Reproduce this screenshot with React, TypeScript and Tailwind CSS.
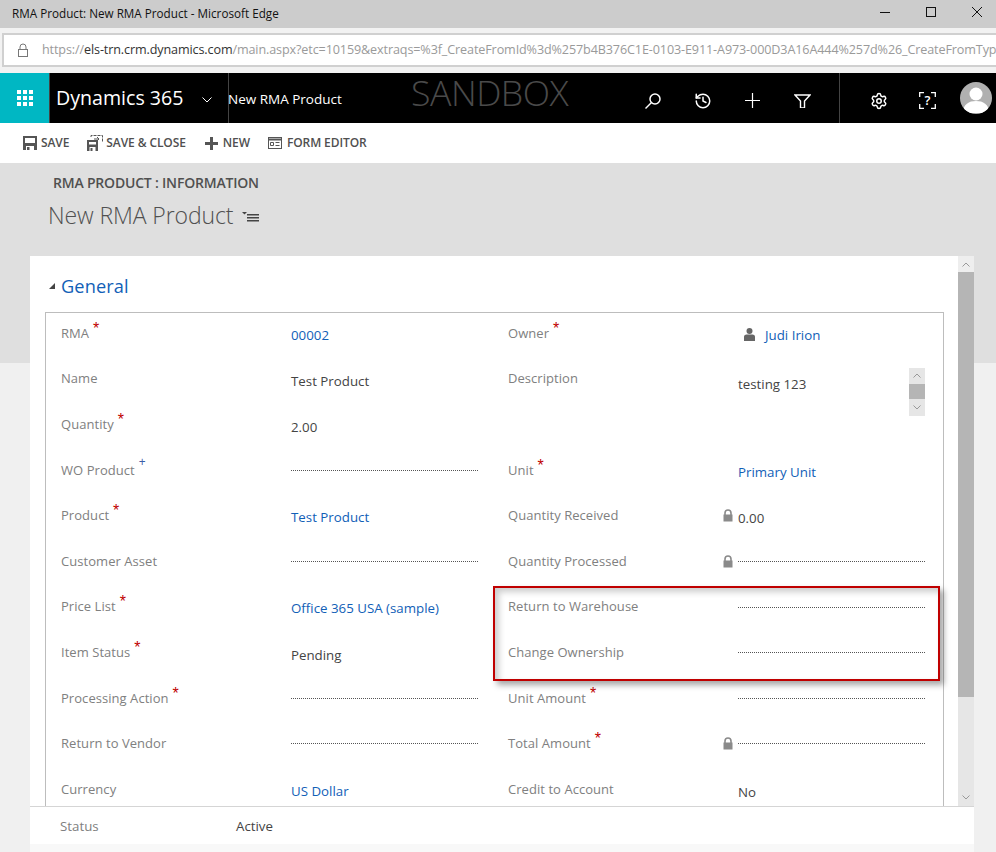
import React from "react";
import { History, Settings } from "lucide-react";

const font = "font-['Open_Sans',_'Noto_Sans',_sans-serif]";

function Star({ blue }: { blue?: boolean }) {
  return blue ? (
    <span className="ml-[4px] mt-[5px] text-[12px] leading-none text-[#3b5ea8] self-start pt-[3px]">+</span>
  ) : (
    <span className="ml-[4px] text-[16px] leading-none text-[#c00000] self-start pt-[10px] font-['Liberation_Sans',_sans-serif]">*</span>
  );
}

function Lock() {
  return (
    <svg width="10" height="13" viewBox="0 0 10 13" className="absolute left-[-15px] top-[16px]">
      <path d="M2 6V4a3 3 0 0 1 6 0v2" fill="none" stroke="#8a8a8a" strokeWidth="1.6" />
      <rect x="0.5" y="5.500" width="9" height="7" fill="#8a8a8a" />
    </svg>
  );
}

function Dash() {
  return <div className="w-full border-t border-dotted border-[#555555]" />;
}

type RowP = {
  label: string;
  req?: boolean;
  rec?: boolean;
  children?: React.ReactNode;
  off?: string;
  h?: string;
};

function Row({ label, req, rec, children, off, h }: RowP) {
  return (
    <div className={`flex ${h ?? "h-[45.6px]"}`}>
      <div className="w-[245px] pl-[15px] h-[45.6px] flex items-center text-[13px] text-[#808080] tracking-[0.05px]">
        <span>{label}</span>
        {req && <Star />}
        {rec && <Star blue />}
      </div>
      <div className={`w-[187px] relative ${off ?? "h-[45.6px] flex items-center"}`}>{children}</div>
    </div>
  );
}

const link = "text-[13.3px] text-[#1160b7]";
const val = "text-[13.3px] text-[#444444]";

function NavIcon({ children, className }: { children: React.ReactNode; className: string }) {
  return <div className={className}>{children}</div>;
}

export default function App() {
  return (
    <div className={`w-[996px] h-[852px] overflow-hidden bg-[#f0f0f0] relative ${font}`}>
      {/* Title bar */}
      <div className="h-[28px] bg-[#cccccc] flex items-center pl-[12px] text-[11.7px] text-[#111111]">
        <span className="flex-1">RMA Product: New RMA Product - Microsoft Edge</span>
        <svg width="12" height="12" viewBox="0 0 12 12" className="mr-[34px] -mt-[4px]"><path d="M1 6.500h10" stroke="#111" /></svg>
        <svg width="12" height="12" viewBox="0 0 12 12" className="mr-[34px] -mt-[4px]"><rect x="1.500" y="1.500" width="9" height="9" fill="none" stroke="#111" /></svg>
        <svg width="12" height="12" viewBox="0 0 12 12" className="mr-[13px] -mt-[4px]"><path d="M1 1l10 10M11 1L1 11" stroke="#111" /></svg>
      </div>
      {/* Address bar */}
      <div className="h-[45px] bg-[#f2f2f2] pt-[5px] pl-[2px]">
        <div className="h-[34px] bg-white border-y-2 border-l-2 border-[#d0d0d0] flex items-center pl-[13px] overflow-hidden whitespace-nowrap text-[12.6px] tracking-[-0.12px] text-[#9a9a9a]">
          <svg width="12" height="14" viewBox="0 0 12 14" className="mr-[13px] shrink-0">
            <path d="M3 6V4a3 3 0 0 1 6 0v2" fill="none" stroke="#777" />
            <rect x="1.500" y="6.500" width="9" height="7" fill="none" stroke="#777" />
          </svg>
          <span>https://</span>
          <span className="text-[#333333]">els-trn.crm.dynamics.com</span>
          <span>/main.aspx?etc=10159&amp;extraqs=%3f_CreateFromId%3d%257b4B376C1E-0103-E911-A973-000D3A16A444%257d%26_CreateFromTyp</span>
        </div>
      </div>
      {/* Nav */}
      <div className="h-[50px] bg-black flex items-center text-white relative">
        <div className="w-[50px] h-full bg-[#00b7c3] border-r border-[#444] flex items-center justify-center">
          <svg width="16" height="16" viewBox="0 0 16 16" fill="#fff">
            {[0, 6, 12].map((y) => [0, 6, 12].map((x) => <rect key={`${x}-${y}`} x={x} y={y} width="4" height="4" />))}
          </svg>
        </div>
        <span className="ml-[6px] w-[135px] text-[19.6px] leading-none font-normal whitespace-nowrap">Dynamics 365</span>
        <svg width="10" height="6" viewBox="0 0 10 6" className="ml-[11px] mt-[4px]"><path d="M.5.500L5 5 9.500.5" fill="none" stroke="#fff" /></svg>
        <div className="ml-[16px] h-full w-px bg-[#444]" />
        <span className="-ml-px mt-[2px] w-[183px] text-[13.5px] whitespace-nowrap">New RMA Product</span>
        <span className="text-[35.7px] leading-none font-light text-[#4a4a4a] -mt-[10px] w-[217px] whitespace-nowrap tracking-[-0.5px]">SANDBOX</span>
        <NavIcon className="w-[50px] flex justify-center mt-[5px]">
          <svg width="18" height="18" viewBox="0 0 18 18" fill="none" stroke="#fff" strokeWidth="1.500"><circle cx="11" cy="7" r="5" /><path d="M7.500 10.500L1.500 16.500" /></svg>
        </NavIcon>
        <NavIcon className="w-[50px] flex justify-center mt-[5px]">
          <History size={18} strokeWidth={2} color="#fff" />
        </NavIcon>
        <NavIcon className="w-[48px] flex justify-center mt-[5px]">
          <svg width="15" height="15" viewBox="0 0 15 15" fill="none" stroke="#fff" strokeWidth="1.200"><path d="M0 7.500h15M7.500 0v15" /></svg>
        </NavIcon>
        <NavIcon className="w-[52px] flex justify-center mt-[5px]">
          <svg width="17" height="14" viewBox="0 0 17 14" fill="none" stroke="#fff" strokeWidth="1.400"><path d="M1 1h15l-5.500 6v7h-4V7z" /></svg>
        </NavIcon>
        <div className="ml-[11px] h-full w-px bg-[#444]" />
        <NavIcon className="ml-[14px] w-[49px] flex justify-center mt-[5px]">
          <Settings size={18} strokeWidth={2} color="#fff" />
        </NavIcon>
        <NavIcon className="w-[49px] flex justify-center mt-[5px]">
          <div className="w-[17px] h-[17px] relative flex items-center justify-center text-[13px] font-semibold leading-none">
            <svg width="17" height="17" viewBox="0 0 17 17" className="absolute inset-0" fill="none" stroke="#fff" strokeWidth="1.300"><path d="M5 .7H.7V5M12 .7h4.300V5M5 16.300H.7V12M12 16.300h4.300V12" /></svg>
            ?
          </div>
        </NavIcon>
        <div className="ml-[8px] w-[32px] h-[32px] rounded-full overflow-hidden bg-[#b0b0b0]">
          <svg width="32" height="32" viewBox="0 0 32 32" fill="#fff"><circle cx="16" cy="12" r="6.500" /><path d="M3 31c0-9 6-12 13-12s13 3 13 12z" /></svg>
        </div>
      </div>
      {/* Toolbar */}
      <div className="h-[40px] bg-white flex items-center pl-[23px] text-[12px] font-semibold text-[#505050] tracking-[-0.1px]">
        <svg width="14" height="14" viewBox="0 0 14 14" className="mr-[4px]"><path d="M0 0h14v14H0z" fill="#555" /><rect x="2" y="2" width="10" height="5" fill="#fff" /><rect x="3" y="10" width="8" height="4" fill="#fff" /><rect x="4" y="11" width="2.500" height="3" fill="#555" /></svg>
        <span className="mr-[18px]">SAVE</span>
        <svg width="16" height="16" viewBox="0 0 16 16" className="mr-[3px]"><path d="M0 5h11v11H0z" fill="#555" /><rect x="2" y="7" width="7" height="2.500" fill="#fff" /><rect x="2.500" y="12" width="6" height="4" fill="#fff" /><rect x="3.500" y="13" width="2" height="3" fill="#555" /><path d="M4 2V.5h11.500V7" fill="none" stroke="#555" strokeDasharray="3 1" /><path d="M7 4h5M10 2l2 2-2 2" fill="none" stroke="#555" /></svg>
        <span className="mr-[19px]">SAVE &amp; CLOSE</span>
        <svg width="13" height="13" viewBox="0 0 13 13" className="mr-[5px]"><path d="M5 0h3v5h5v3H8v5H5V8H0V5h5z" fill="#555" /></svg>
        <span className="mr-[18px]">NEW</span>
        <svg width="14" height="12" viewBox="0 0 14 12" className="mr-[5px]" fill="none" stroke="#555"><rect x=".5" y=".5" width="13" height="11" /><path d="M.5 2.500h13" strokeWidth="2" /><path d="M2.500 5.500h3v3h-3zM7.500 5.500h4M7.500 8.500h4" /></svg>
        <span>FORM EDITOR</span>
      </div>
      {/* Header band */}
      <div className="h-[200px] bg-[#dfdfdf] pl-[53px] pt-[11px]">
        <div className="text-[14px] font-semibold text-[#505050] tracking-[-0.2px] leading-[18px]">RMA PRODUCT : INFORMATION</div>
        <div className="-ml-[5px] mt-[8px] flex items-center text-[23px] leading-[30px] font-light text-[#505050]">
          <span className="tracking-[-0.1px]">New RMA Product</span>
          <svg width="17" height="10" viewBox="0 0 17 10" className="ml-[9px] mt-[3px]" fill="#444"><path d="M0 0h5L2.500 2.500z" /><path d="M5 2h12v1.600H5zM5 5h12v1.600H5zM5 8h12v1.600H5z" /></svg>
        </div>
      </div>
      {/* Card */}
      <div className="relative -mt-[107px] ml-[30px] w-[944px] h-[588px] bg-white flex flex-col">
        <div className="h-[550px] flex">
          <div className="w-[928px] overflow-hidden pt-[12px] pl-[15px]">
            <div className="flex items-center h-[36px]">
              <svg width="8" height="8" viewBox="0 0 8 8" className="ml-[3px] mr-[5px]"><path d="M7 1v6H1z" fill="#444" /></svg>
              <span className="text-[18.2px] text-[#1160b7] tracking-[0.1px] mt-[2px]">General</span>
            </div>
            <div className="mt-[8px] w-[899px] h-[600px] border-l border-t border-r border-[#bdbdbd] flex">
              <div className="w-[447px] -mt-[2.2px]">
                <Row label="RMA" req off="pt-[11px]"><span className={link}>00002</span></Row>
                <Row label="Name" off="pt-[12px]"><span className={val}>Test Product</span></Row>
                <Row label="Quantity" req off="pt-[12px]"><span className={val}>2.00</span></Row>
                <Row label="WO Product" rec><Dash /></Row>
                <Row label="Product" req off="pt-[11px]"><span className={link}>Test Product</span></Row>
                <Row label="Customer Asset"><Dash /></Row>
                <Row label="Price List" req off="pt-[11px]"><span className={link}>Office 365 USA (sample)</span></Row>
                <Row label="Item Status" req off="pt-[12px]"><span className={val}>Pending</span></Row>
                <Row label="Processing Action" req><Dash /></Row>
                <Row label="Return to Vendor"><Dash /></Row>
                <Row label="Currency" off="pt-[11px]"><span className={link}>US Dollar</span></Row>
              </div>
              <div className="w-[450px] -mt-[2.2px]">
                <Row label="Owner" req off="pt-[15px]">
                  <div className="flex items-center">
                    <svg width="11" height="13" viewBox="0 0 11 13" className="ml-[6px] mr-[10px] -mt-[3px]" fill="#666"><circle cx="5.500" cy="3" r="3" /><path d="M0 13V8.500c0-1 1-2 2.500-2h6c1.500 0 2.500 1 2.500 2V13z" /></svg>
                    <span className={link}>Judi Irion</span>
                  </div>
                </Row>
                <Row label="Description" h="h-[91.2px]" off="pt-[11.5px]">
                  <div className="flex justify-between">
                    <span className={`${val} pt-[7.5px]`}>testing 123</span>
                    <div className="w-[16px] h-[48px] bg-[#e6e6e6] flex flex-col">
                      <div className="h-[16px] flex items-center justify-center"><svg width="8" height="5" viewBox="0 0 8 5"><path d="M.5 4.500L4 1l3.500 3.500" fill="none" stroke="#999" /></svg></div>
                      <div className="h-[15px] bg-[#b5b5b5]" />
                      <div className="h-[17px] flex items-center justify-center"><svg width="8" height="5" viewBox="0 0 8 5"><path d="M.5.500L4 4 7.500.5" fill="none" stroke="#999" /></svg></div>
                    </div>
                  </div>
                </Row>
                <Row label="Unit" req off="pt-[11px]"><span className={link}>Primary Unit</span></Row>
                <Row label="Quantity Received" off="pt-[12px]"><Lock /><span className={val}>0.00</span></Row>
                <Row label="Quantity Processed"><Lock /><Dash /></Row>
                <Row label="Return to Warehouse"><Dash /></Row>
                <Row label="Change Ownership"><Dash /></Row>
                <Row label="Unit Amount" req><Dash /></Row>
                <Row label="Total Amount" req><Lock /><Dash /></Row>
                <Row label="Credit to Account" off="pt-[12px]"><span className={val}>No</span></Row>
              </div>
            </div>
          </div>
          <div className="w-[16px] bg-[#e6e6e6] flex flex-col">
            <div className="h-[16px] bg-[#eeeeee] flex items-center justify-center"><svg width="8" height="5" viewBox="0 0 8 5"><path d="M.5 4.500L4 1l3.500 3.500" fill="none" stroke="#999" /></svg></div>
            <div className="h-[425px] bg-[#b5b5b5]" />
            <div className="flex-1 flex items-end justify-center pb-[6px]"><svg width="8" height="5" viewBox="0 0 8 5"><path d="M.5.500L4 4 7.500.5" fill="none" stroke="#999" /></svg></div>
          </div>
        </div>
        <div className="h-[38px] border-t border-[#d5d5d5] flex items-center pl-[30px] pt-[2px] text-[13.3px]">
          <span className="w-[176px] text-[#808080]">Status</span>
          <span className="text-[#444444]">Active</span>
        </div>
      </div>
      <div className="h-[8px] ml-[30px] w-[944px] bg-[#f8f8f8]" />
      {/* Annotation */}
      <div className="absolute left-[493px] top-[586px] w-[447px] h-[95px] border-[2px] border-[#c00000] shadow-[4px_4px_6px_rgba(0,0,0,0.35),inset_4px_4px_6px_rgba(0,0,0,0.2)]" />
    </div>
  );
}
